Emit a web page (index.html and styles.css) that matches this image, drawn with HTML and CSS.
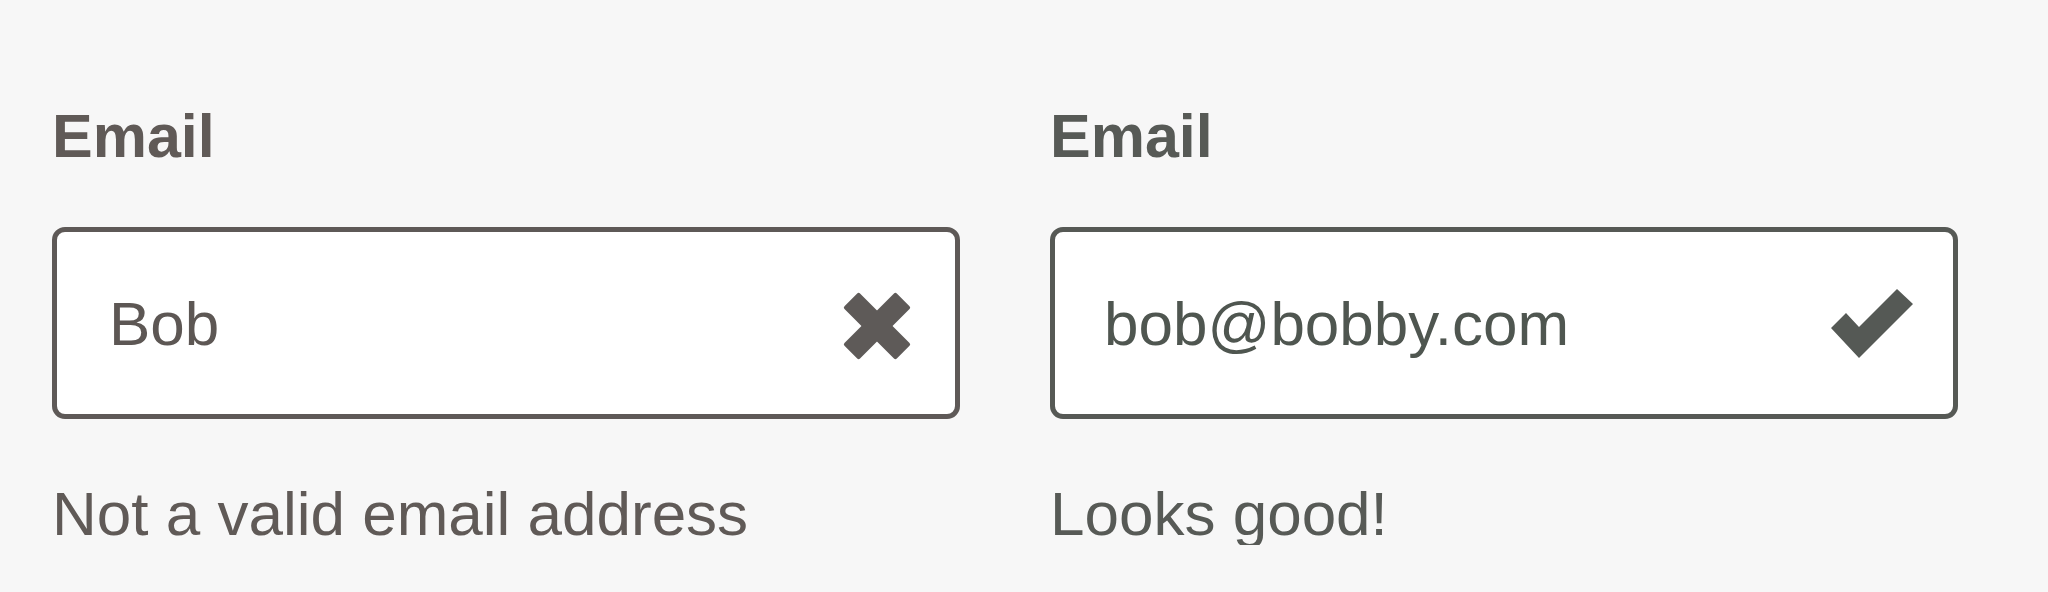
FILE: index.html
```html
<!DOCTYPE html>
<html lang="en">
<head>
    <meta charset="UTF-8">
    <meta name="viewport" content="width=device-width, initial-scale=1.0">
    <title>Email validation</title>
    <link rel="stylesheet" href="styles.css">
</head>
<body>
    <div class="form-row">
        <div class="form-group invalid">
            <label class="form-label" for="email1">Email</label>
            <div class="field">
                <input id="email1" class="field-input" type="text" value="Bob">
                <svg class="field-icon icon-cross" viewBox="0 0 68 68">
                    <rect x="-3" y="23" width="74" height="22" rx="2" transform="rotate(45 34 34)"/>
                    <rect x="-3" y="23" width="74" height="22" rx="2" transform="rotate(-45 34 34)"/>
                </svg>
            </div>
            <div class="form-help">Not a valid email address</div>
        </div>

        <div class="form-group valid">
            <label class="form-label" for="email2">Email</label>
            <div class="field">
                <input id="email2" class="field-input" type="text" value="bob@bobby.com">
                <svg class="field-icon icon-check" viewBox="0 0 82 70">
                    <polygon points="0,40 15,25 28,39 66,1 82,16 28,70"/>
                </svg>
            </div>
            <div class="form-help">Looks good!</div>
        </div>
    </div>
</body>
</html>
```

FILE: styles.css
```css
body { margin: 0; background: #f7f7f7; font-family: "Liberation Sans", Arial, sans-serif; }
.form-row { display: grid; grid-template-columns: 908px 908px; column-gap: 90px; padding: 106px 0 0 52px; }

.form-label { display: block; font-size: 61px; font-weight: bold; line-height: 1; }
.field { display: flex; align-items: center; height: 192px; box-sizing: border-box; margin-top: 60px; padding: 0 40px 0 52px; background: #fff; border: 5px solid; border-radius: 13px; }
.field-input { flex: 1; min-width: 0; border: none; outline: none; background: transparent; padding: 0; font: 62px/1 "Liberation Sans", Arial, sans-serif; }
.field-icon { flex: none; }
.icon-cross { width: 68px; height: 68px; margin-top: 6px; margin-right: 4px; }
.icon-check { width: 82px; height: 70px; }
.form-help { margin-top: 64px; font-size: 62px; line-height: 1; }

.invalid .form-label, .invalid .form-help { color: #605a57; }
.invalid .field { border-color: #5e5957; }
.invalid .field-input { color: #5d5754; }
.invalid .field-icon { fill: #5e5a58; }

.valid .form-label, .valid .form-help { color: #575a56; }
.valid .field { border-color: #565955; padding-left: 49px; }
.valid .field-input { color: #4f5650; }
.valid .field-icon { fill: #555955; }
```
